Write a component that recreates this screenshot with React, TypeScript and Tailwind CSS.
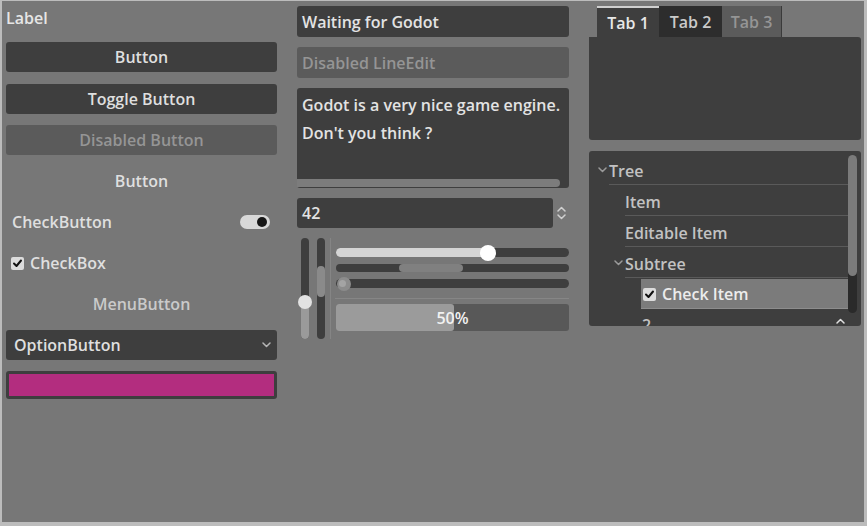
import React from 'react';

const font = { fontFamily: '"Open Sans", "Noto Sans", sans-serif' };

function Chevron({ className = '', up = false }: { className?: string; up?: boolean }) {
  return (
    <svg width="9" height="6" viewBox="0 0 9 6" className={className}>
      <path
        d={up ? 'M1 5 L4.5 1.5 L8 5' : 'M1 1 L4.5 4.5 L8 1'}
        fill="none"
        stroke="currentColor"
        strokeWidth="1.5"
        strokeLinecap="round"
        strokeLinejoin="round"
      />
    </svg>
  );
}

function CheckIcon() {
  return (
    <div className="w-[13px] h-[13px] rounded-[2px] bg-[#dcdcdc] flex items-center justify-center">
      <svg width="11" height="11" viewBox="0 0 11 11">
        <path d="M2 5.5 L4.5 8 L9 2.5" fill="none" stroke="#111" strokeWidth="2" strokeLinecap="round" strokeLinejoin="round" />
      </svg>
    </div>
  );
}

function LeftColumn() {
  return (
    <div className="flex flex-col gap-[11px]">
      <div className="h-[25px] flex items-center text-[#e6e6e6] -mt-[1px] mb-[1px]">Label</div>
      <button className="h-[30px] mb-[1px] rounded-[3px] bg-[#3e3e3e] text-[#dfdfdf]">Button</button>
      <button className="h-[30px] rounded-[3px] bg-[#3e3e3e] text-[#dfdfdf]">Toggle Button</button>
      <button className="h-[30px] rounded-[3px] bg-[#5b5b5b] text-[#959595]">Disabled Button</button>
      <button className="h-[30px] text-[#dfdfdf]">Button</button>
      <div className="h-[30px] flex items-center justify-between pl-[6px] pr-[7px] text-[#dfdfdf]">
        <span>CheckButton</span>
        <div className="w-[30px] h-[14px] rounded-full bg-[#d8d8d8] flex items-center justify-end pr-[3px]">
          <div className="w-[10px] h-[10px] rounded-full bg-[#151515]" />
        </div>
      </div>
      <div className="h-[30px] flex items-center gap-[6px] pl-[5px] text-[#dfdfdf]">
        <CheckIcon />
        <span>CheckBox</span>
      </div>
      <div className="h-[30px] flex items-center justify-center text-[#cacaca]">MenuButton</div>
      <div className="h-[30px] rounded-[3px] bg-[#3e3e3e] text-[#dfdfdf] flex items-center justify-between pl-[8px] pr-[6px]">
        <span>OptionButton</span>
        <Chevron className="text-[#b5b5b5]" />
      </div>
      <div className="h-[28px] rounded-[3px] bg-[#3e3e3e] p-[3px]">
        <div className="h-full bg-[#b32d7f]" />
      </div>
    </div>
  );
}

function MiddleColumn() {
  return (
    <div className="flex flex-col">
      <div className="h-[31px] rounded-[3px] bg-[#3e3e3e] text-[#e3e3e3] flex items-center px-[5px]">Waiting for Godot</div>
      <div className="mt-[10px] h-[31px] rounded-[3px] bg-[#5b5b5b] text-[#959595] flex items-center px-[5px]">Disabled LineEdit</div>
      <div className="mt-[10px] h-[100px] rounded-[3px] bg-[#3e3e3e] text-[#e3e3e3] flex flex-col">
        <div className="px-[5px] pt-[3px] leading-[28px] flex-1">
          <div>Godot is a very nice game engine.</div>
          <div>Don't you think ?</div>
        </div>
        <div className="h-[8px] mb-[1px] mr-[9px] rounded-r-full bg-[#7c7c7c] rounded-bl-[3px]" />
      </div>
      <div className="mt-[10px] h-[30px] flex items-center gap-[4px]">
        <div className="flex-1 h-full rounded-[3px] bg-[#3e3e3e] text-[#e3e3e3] flex items-center px-[5px]">42</div>
        <div className="w-[8px] flex flex-col items-center gap-[2px] text-[#d0d0d0] mr-[4px]">
          <Chevron up />
          <Chevron />
        </div>
      </div>
      <div className="mt-[10px] h-[101px] flex">
        <div className="w-[8px] ml-[4px] rounded-full bg-[#3e3e3e] relative flex flex-col justify-end">
          <div className="h-[36px] rounded-full bg-[#9a9a9a]" />
          <div className="absolute left-1/2 top-[57px] w-[14px] h-[14px] -ml-[7px] rounded-full bg-[#e2e2e2]" />
        </div>
        <div className="w-[8px] ml-[8px] rounded-full bg-[#3e3e3e] pt-[28px]">
          <div className="h-[31px] rounded-full bg-[#8a8a8a]" />
        </div>
        <div className="w-px ml-[5px] bg-[#858585]" />
        <div className="flex-1 ml-[5px] flex flex-col">
          <div className="mt-[10px] h-[9px] rounded-full bg-[#3e3e3e] flex items-center relative">
            <div className="w-[152px] h-full rounded-l-full bg-[#d5d5d5]" />
            <div className="absolute left-[144px] w-[16px] h-[16px] rounded-full bg-white" />
          </div>
          <div className="mt-[7px] h-[8px] rounded-full bg-[#3e3e3e] pl-[63px]">
            <div className="w-[64px] h-full rounded-full bg-[#808080]" />
          </div>
          <div className="mt-[7px] h-[9px] rounded-full bg-[#3e3e3e] flex items-center relative">
            <div className="absolute left-[1px] w-[14px] h-[14px] rounded-full bg-[#8c8c8c] flex items-center pl-[2px]">
              <div className="w-[7px] h-[7px] rounded-full bg-[#a4a4a4]" />
            </div>
          </div>
          <div className="mt-[10px] h-px bg-[#868686] -ml-[1px]" />
          <div className="mt-[5px] h-[27px] rounded-[3px] bg-[#585858] relative flex items-center justify-center">
            <div className="absolute left-0 top-0 bottom-0 w-[118px] rounded-[3px] bg-[#9b9b9b]" />
            <span className="relative text-[#f2f2f2]">50%</span>
          </div>
        </div>
      </div>
    </div>
  );
}

function TreeRow({
  indent,
  label,
  chevron,
  selected,
  lineFrom,
}: {
  indent: number;
  label: React.ReactNode;
  chevron?: number;
  selected?: boolean;
  lineFrom: number;
}) {
  return (
    <div className="h-[31px] relative flex items-center">
      {chevron !== undefined && (
        <div className="absolute top-[12px]" style={{ left: chevron }}>
          <Chevron className="text-[#9a9a9a]" />
        </div>
      )}
      {selected ? (
        <div
          className="absolute top-0 h-[30px] right-0 bg-[#7b7b7b] border-b border-[#8d8d8d] flex items-center gap-[6px] pl-[2px] pt-[1px] text-[#ececec]"
          style={{ left: indent - 2 }}
        >
          <CheckIcon />
          <span>{label}</span>
        </div>
      ) : (
        <span className="absolute text-[#c2c2c2]" style={{ left: indent }}>
          {label}
        </span>
      )}
      {!selected && (
        <div className="absolute bottom-[1px] right-0 h-px bg-[#5a5a5a]" style={{ left: lineFrom }} />
      )}
    </div>
  );
}

function RightColumn() {
  return (
    <div className="flex flex-col">
      <div className="h-[31px] flex pl-[8px]">
        <div className="w-[62px] bg-[#3e3e3e] border-t-2 border-[#cfcfcf] text-[#e8e8e8] flex items-center justify-center">Tab 1</div>
        <div className="w-[63px] bg-[#2d2d2d] text-[#cacaca] flex items-center justify-center">Tab 2</div>
        <div className="w-[60px] bg-[#5b5b5b] border-r border-[#3a3a3a] text-[#959595] flex items-center justify-center">Tab 3</div>
      </div>
      <div className="h-[103px] rounded-b-[3px] rounded-tr-[3px] bg-[#3e3e3e]" />
      <div className="mt-[11px] h-[175px] rounded-[3px] bg-[#3e3e3e] relative overflow-hidden">
        <div className="pt-[4px] pr-[13px]">
          <TreeRow indent={20} label="Tree" chevron={9} lineFrom={20} />
          <TreeRow indent={36} label="Item" lineFrom={36} />
          <TreeRow indent={36} label="Editable Item" lineFrom={36} />
          <TreeRow indent={36} label="Subtree" chevron={25} lineFrom={36} />
          <TreeRow indent={54} label="Check Item" selected lineFrom={54} />
          <div className="h-[31px] relative">
            <span className="absolute left-[53px] top-[3px] text-[#c2c2c2]">2</span>
          </div>
        </div>
        <div className="absolute right-[4px] top-[4px] w-[9px] h-[158px] rounded-full bg-[#2a2a2a]">
          <div className="h-[121px] rounded-full bg-[#7b7b7b]" />
        </div>
        <div className="absolute right-[16px] bottom-[2px] text-[#e0e0e0]">
          <Chevron up />
        </div>
      </div>
    </div>
  );
}

export default function App() {
  return (
    <div className="w-[867px] h-[526px] bg-[#bcbcbc] overflow-hidden" style={font}>
      <div className="ml-[2px] mt-[1px] w-[862px] h-[521px] bg-[#777777] pl-[4px] pt-[5px] text-[16px] font-semibold leading-normal">
        <div className="grid grid-cols-[271px_272px_272px] gap-x-[20px] items-start">
          <LeftColumn />
          <MiddleColumn />
          <RightColumn />
        </div>
      </div>
    </div>
  );
}
